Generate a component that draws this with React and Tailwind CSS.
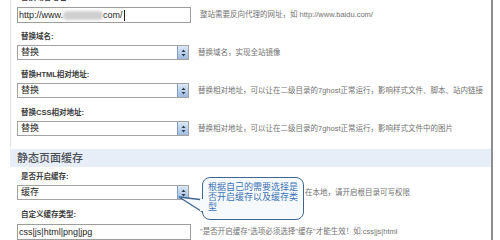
const Arrow = () => (
  <div className="h-full w-[11px] flex items-center justify-center bg-gradient-to-b from-[#dce8f6] to-[#9fbbe0] border-l border-[#7f9fc7]">
    <svg width="5" height="8" viewBox="0 0 5 8">
      <path d="M2.5 0.5 L4.5 3 L0.5 3 Z" fill="#2c3e55" />
      <path d="M2.5 7.5 L4.5 5 L0.5 5 Z" fill="#2c3e55" />
    </svg>
  </div>
);

const Label = ({ children, className = "" }) => (
  <div className={`pl-[4px] h-[12px] leading-[12px] text-[7.5px] font-bold text-[#3d3d3d] mb-[2px] ${className}`}>
    {children}
  </div>
);

const Desc = ({ children, className = "ml-[9px]" }) => (
  <span className={`${className} text-[7.5px] text-[#727272] whitespace-nowrap`}>{children}</span>
);

const Select = ({ value }) => (
  <div className="w-[172px] h-[15px] border border-[#a3a3a3] bg-white flex items-center justify-between">
    <span className="pl-[3px] text-[9px] text-[#1e1e1e] leading-none">{value}</span>
    <Arrow />
  </div>
);

const SelectField = ({ label, value, desc, descClass, className = "" }) => (
  <div className={`pb-[9px] ${className}`}>
    <Label>{label}</Label>
    <div className="flex items-center">
      <Select value={value} />
      <Desc className={descClass}>{desc}</Desc>
    </div>
  </div>
);

export default function App() {
  return (
    <div className="relative w-[500px] h-[240px] overflow-hidden bg-white font-['Liberation_Sans','Noto_Sans_CJK_SC',sans-serif]">
      <div className="w-[493px] h-full border-r-2 border-[#8e8e8e] pl-[10px] flex flex-col">
        {/* 反向代理 */}
        <div className="-mt-[8px] border-l border-[#dde2ea] pl-[6px] pb-[2px]">
          <div className="pb-[8px]">
            <Label className="mb-[3px]">替换域名地址:</Label>
            <div className="flex items-center">
              <div className="w-[174px] h-[16px] border border-[#9d9d9d] bg-white flex items-center pl-[1px] text-[9px] text-[#1e1e1e] leading-none">
                <span>http://www.</span>
                <span className="inline-block w-[40px] h-[9px] rounded-sm bg-[#cfcfcf] blur-[1.5px]" />
                <span>com/</span>
                <span className="ml-[1px] w-px h-[11px] bg-[#222]" />
              </div>
              <Desc>整站需要反向代理的网址，如 http://www.baidu.com/</Desc>
            </div>
          </div>
          <SelectField label="替换域名:" value="替换" desc="替换域名，实现全站镜像" />
          <SelectField
            label="替换HTML相对地址:"
            value="替换"
            desc="替换相对地址，可以让在二级目录的7ghost正常运行，影响样式文件、脚本、站内链接"
          />
          <SelectField
            label="替换CSS相对地址:"
            value="替换"
            desc="替换相对地址，可以让在二级目录的7ghost正常运行，影响样式文件中的图片"
          />
        </div>

        {/* 静态页面缓存 */}
        <div className="mt-[2px] h-[18px] bg-[#e8eef8] flex items-center pl-[7px] text-[11px] font-medium text-[#4a4f57]">
          静态页面缓存
        </div>
        <div className="pl-[7px]">
          <SelectField
            className="pt-[4px] pb-[8px]"
            label="是否开启缓存:"
            value="缓存"
            desc="在本地，请开启根目录可写权限"
            descClass="ml-[116px]"
          />
          <div>
            <Label className="mb-[3px]">自定义缓存类型:</Label>
            <div className="flex items-center">
              <div className="w-[174px] h-[16px] border border-[#9d9d9d] bg-white flex items-center pl-[1px] text-[9px] text-[#1e1e1e] leading-none">
                css|js|html|png|jpg
              </div>
              <Desc>"是否开启缓存"选项必须选择"缓存"才能生效！如:css|js|html</Desc>
            </div>
          </div>
        </div>
      </div>

      {/* 提示气泡 */}
      <svg className="absolute left-[176px] top-[194px]" width="32" height="24" viewBox="0 0 32 24">
        <path d="M3 3 L28 6 L28 19 Z" fill="#f7fafd" stroke="#3f6690" strokeWidth="1.3" strokeLinejoin="round" />
      </svg>
      <div className="absolute left-[202px] top-[177px] w-[102px] h-[43px] rounded-[8px] border-[1.5px] border-[#3f6690] bg-[#f7fafd] pl-[5px] pt-[4px] text-[9px] leading-[10px] text-[#3b72b5] whitespace-nowrap">
        根据自己的需要选择是
        <br />
        否开启缓存以及缓存类
        <br />
        型
      </div>
      <div className="absolute left-[200px] top-[199px] w-[6px] h-[12px] bg-[#f7fafd]" />
    </div>
  );
}
